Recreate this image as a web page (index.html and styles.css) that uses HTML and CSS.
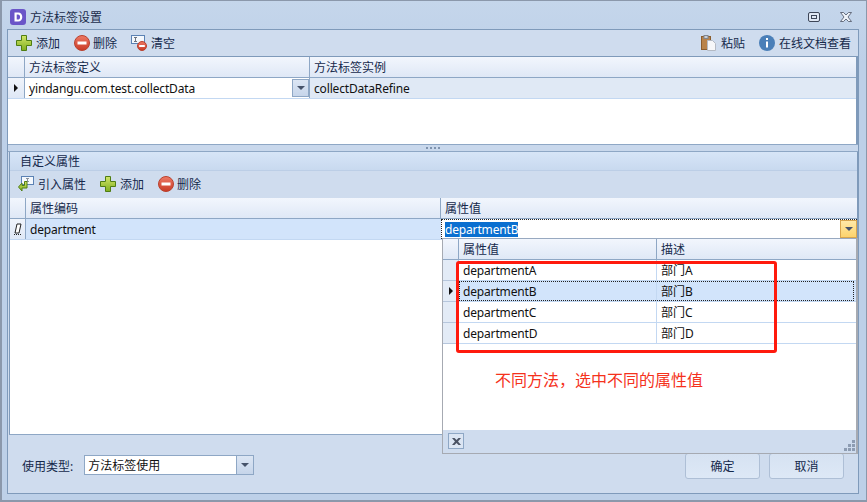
FILE: index.html
```html
<!DOCTYPE html>
<html lang="zh">
<head>
<meta charset="utf-8">
<title>方法标签设置</title>
<link rel="stylesheet" href="styles.css">
</head>
<body>
<svg class="defs" width="0" height="0" aria-hidden="true">
  <defs>
    <linearGradient id="plusFill" x1="0" y1="0" x2="0" y2="1"><stop offset="0" stop-color="#d3e66a"/><stop offset="1" stop-color="#7fae1e"/></linearGradient>
    <linearGradient id="minusFill" x1="0" y1="0" x2="0" y2="1"><stop offset="0" stop-color="#ee7a66"/><stop offset="1" stop-color="#c93a25"/></linearGradient>
    <symbol id="plus" viewBox="0 0 16 16"><path d="M5.500 0.500h5v5h5v5h-5v5h-5v-5h-5v-5h5z" fill="url(#plusFill)" stroke="#4f7d12"/></symbol>
    <symbol id="minus" viewBox="0 0 16 16"><circle cx="8" cy="8" r="7.500" fill="url(#minusFill)" stroke="#b9422f"/><rect x="3.500" y="6.500" width="9" height="3" fill="#fff"/></symbol>
  </defs>
</svg>
<div class="window">
  <header class="titlebar">
    <svg class="logo" width="16" height="16" viewBox="0 0 16 16"><rect width="16" height="16" rx="3" fill="#6a55c8"/><path d="M4.500 3.500h3.600c2.600 0 4.200 1.800 4.200 4.500s-1.600 4.500-4.200 4.500H4.500zM6.700 5.400v5.200h1.300c1.300 0 2.100-1 2.100-2.600S9.300 5.400 8 5.400z" fill="#fff"/></svg>
    <span class="title">方法标签设置</span>
    <div class="winbtns">
      <svg width="12" height="10" viewBox="0 0 12 10"><rect x="0.500" y="0.500" width="11" height="9" rx="1.500" fill="#dfe7f3" stroke="#3d4658"/><rect x="3.500" y="3.500" width="5" height="3" fill="none" stroke="#3d4658"/></svg>
      <svg width="12" height="10" viewBox="0 0 12 10"><path d="M0.500 0.500h3L6 3l2.500-2.500h3L8 5l3.500 4.500h-3L6 7 3.500 9.500h-3L4 5z" fill="#eef2f8" stroke="#4a5263" stroke-width="0.800"/></svg>
    </div>
  </header>
  <main class="client">
    <nav class="toolbar top-bar">
      <button class="tool first"><svg class="ic"><use href="#plus"/></svg><span>添加</span></button>
      <button class="tool tight"><svg class="ic"><use href="#minus"/></svg><span>删除</span></button>
      <button class="tool">
        <svg class="ic" viewBox="0 0 16 16"><rect x="0.500" y="0.500" width="13" height="8" fill="#f4f8fd" stroke="#5b82b4"/><path d="M3 2.500h3M4.500 2.500v4M3 6.500h3" stroke="#6d7480" fill="none"/><circle cx="11" cy="11" r="4.500" fill="url(#minusFill)" stroke="#b9422f"/><rect x="8.200" y="10" width="5.600" height="2" fill="#fff"/></svg><span>清空</span>
      </button>
      <span class="spacer"></span>
      <button class="tool">
        <svg class="ic" viewBox="0 0 16 16"><rect x="0.500" y="1.500" width="9" height="13" fill="#b9834a" stroke="#8a5d2e"/><rect x="3" y="0.500" width="4" height="3" fill="#c9ced6" stroke="#80868f"/><path d="M6.500 5.500h5l3 3v7h-8z" fill="#f6f7f9" stroke="#b4bac4"/></svg><span>粘贴</span>
      </button>
      <button class="tool">
        <svg class="ic" viewBox="0 0 16 16"><circle cx="8" cy="8" r="8" fill="#4a7fb8"/><rect x="7" y="3" width="2" height="2" fill="#fff"/><rect x="7" y="6.500" width="2" height="6" fill="#fff"/></svg><span>在线文档查看</span>
      </button>
    </nav>

    <section class="grid methods">
      <div class="row head methods-cols">
        <div class="ind"></div><div class="cell">方法标签定义</div><div class="cell last">方法标签实例</div>
      </div>
      <div class="row body methods-cols">
        <div class="ind"><i class="arrow"></i></div>
        <div class="cell editor en">yindangu.com.test.collectData<span class="drop"><i></i></span></div>
        <div class="cell selected last en">collectDataRefine</div>
      </div>
    </section>

    <div class="splitter"><span></span></div>

    <section class="group">
      <h2 class="group-title">自定义属性</h2>
      <nav class="toolbar sub-bar">
        <button class="tool first">
          <svg class="ic" viewBox="0 0 16 16"><rect x="3.500" y="0.500" width="12" height="8" fill="#f4f8fd" stroke="#5b82b4"/><path d="M8 2.500h3M9.500 2.500v3M8 5.500h3" stroke="#8b919b" fill="none"/><path d="M6.500 5.500v4h-2.500V7L0.500 11 4 15v-3h5V5.500z" fill="url(#plusFill)" stroke="#4f7d12"/></svg><span>引入属性</span>
        </button>
        <button class="tool"><svg class="ic"><use href="#plus"/></svg><span>添加</span></button>
        <button class="tool tight"><svg class="ic"><use href="#minus"/></svg><span>删除</span></button>
      </nav>
      <div class="grid attrs">
        <div class="row head attrs-cols">
          <div class="ind"></div><div class="cell">属性编码</div><div class="cell last">属性值</div>
        </div>
        <div class="row body attrs-cols">
          <div class="ind">
            <svg width="8" height="12" viewBox="0 0 8 12"><path d="M3 1h4L5 10H1z" fill="#fff" stroke="#222"/><path d="M0 11.500h8" stroke="#222" stroke-dasharray="1 1"/></svg>
          </div>
          <div class="cell active en">department</div>
          <div class="cell value-editor last en"><span class="picked">departmentB</span><span class="drop hot"><i></i></span></div>
        </div>
      </div>
    </section>

    <footer class="footer">
      <label class="type-label">使用类型:</label>
      <div class="combo"><span>方法标签使用</span><span class="drop"><i></i></span></div>
      <span class="spacer"></span>
      <button class="btn">确定</button>
      <button class="btn">取消</button>
    </footer>
  </main>

  <!-- 下拉列表：属性值候选项 -->
  <div class="popup">
    <div class="row head popup-cols">
      <div class="ind"></div><div class="cell">属性值</div><div class="cell last">描述</div>
    </div>
    <div class="row pop-row popup-cols"><div class="ind"></div><div class="cell en">departmentA</div><div class="cell last">部门A</div></div>
    <div class="row pop-row current popup-cols"><div class="ind"><i class="arrow"></i></div><div class="cell en">departmentB</div><div class="cell last">部门B</div></div>
    <div class="row pop-row popup-cols"><div class="ind"></div><div class="cell en">departmentC</div><div class="cell last">部门C</div></div>
    <div class="row pop-row popup-cols"><div class="ind"></div><div class="cell en">departmentD</div><div class="cell last">部门D</div></div>
    <div class="pop-fill"></div>
    <div class="pop-foot">
      <span class="pop-close"><svg width="9" height="7" viewBox="0 0 9 7"><path d="M0 0h2.500L4.500 2 6.500 0H9L6 3.500 9 7H6.500L4.500 5 2.500 7H0L3 3.500z" fill="#4a5263"/></svg></span>
      <svg class="grip" width="11" height="11" viewBox="0 0 11 11"><path d="M8 0h3v3H8zM4 4h3v3H4zM8 4h3v3H8zM0 8h3v3H0zM4 8h3v3H4zM8 8h3v3H8z" fill="#8d9cb2"/></svg>
    </div>
  </div>

  <div class="callout"></div>
  <p class="callout-note">不同方法，选中不同的属性值</p>
</div>
</body>
</html>
```
FILE: styles.css
```css
* { box-sizing: border-box; }

html, body { margin: 0; padding: 0; }

body {
  width: 867px;
  height: 502px;
  overflow: hidden;
  font: 12px/1 "Noto Sans", "Noto Sans CJK SC", sans-serif;
  color: #15294b;
}

.defs { position: absolute; }

button { font: inherit; color: inherit; background: none; border: 0; padding: 0; }

.window {
  position: relative;
  width: 867px;
  height: 502px;
  display: flex;
  flex-direction: column;
  padding: 0 7px 6px 5px;
  background: linear-gradient(#c5d6eb, #bdd0e8 60px);
  border: 1px solid #8b98ab;
  border-bottom-width: 2px;
  border-left-width: 2px;
}

/* Title bar */
.titlebar {
  height: 28px;
  flex: none;
  display: flex;
  align-items: center;
  padding: 4px 0 0 3px;
}
.logo { margin-right: 4px; }
.title { font-size: 12px; color: #1b2c4a; padding-top: 2px; }
.winbtns {
  margin-left: auto;
  margin-right: 7px;
  display: flex;
  gap: 20px;
  align-items: center;
}

/* Client area */
.client {
  flex: 1;
  display: flex;
  flex-direction: column;
  background: #cfdcee;
  border: 1px solid #7f9aba;
  min-height: 0;
}

.toolbar { display: flex; align-items: center; flex: none; }
.top-bar { height: 27px; padding: 0 7px 0 1px; gap: 14px; border-bottom: 1px solid #7f9aba; }
.sub-bar { height: 27px; padding: 0 0 1px 1px; gap: 14px; background: #cfdcee; }
.spacer { flex: 1; }

.tool { display: flex; align-items: center; gap: 4px; white-space: nowrap; color: #15294b; }
.tool span { padding-top: 2px; }
.tool.first { margin-left: 7px; }
.tool.tight { gap: 3px; }
.ic { width: 16px; height: 16px; flex: none; }

/* Grids */
.grid { background: #fff; flex: none; }
.methods { height: 87px; border-right: 2px solid #7f9aba; }
.attrs { flex: 1; }

.row { display: grid; }
.methods-cols { grid-template-columns: 17px 285px 1fr; }
.attrs-cols { grid-template-columns: 16px 415px 1fr; }
.popup-cols { grid-template-columns: 16px 198px 1fr; }

.head { height: 21px; background: linear-gradient(#f2f6fd, #dfe8f6); border-bottom: 1px solid #8ea7c5; }
.body { height: 21px; border-bottom: 1px solid #c3d8f2; }

.ind {
  display: flex;
  align-items: center;
  justify-content: center;
  border-right: 1px solid #8ea7c5;
}
.body .ind { background: linear-gradient(#f0f4fb, #dfe8f6); }
.arrow {
  width: 0;
  height: 0;
  border-left: 4px solid #111;
  border-top: 4px solid transparent;
  border-bottom: 4px solid transparent;
}

.cell {
  display: flex;
  align-items: center;
  padding: 1px 0 0 4px;
  min-width: 0;
  border-right: 1px solid #8ea7c5;
  white-space: nowrap;
  color: #15294b;
}
.cell.last { border-right: 0; }
.en { letter-spacing: -0.16px; }

.methods .editor { position: relative; background: #fff; color: #111; }
.selected { background: #e0e9f5; color: #111; }
.active { background: #d2e4fb; color: #111; border-right-color: #d2e4fb; }

.value-editor {
  position: relative;
  background: #fff;
  color: #fff;
  outline: 1px dotted #222;
  outline-offset: -1px;
}
.picked { background: #0a6fd0; line-height: 15px; height: 15px; }

.drop {
  position: absolute;
  right: 0;
  top: 1px;
  bottom: 1px;
  width: 17px;
  display: flex;
  align-items: center;
  justify-content: center;
  background: linear-gradient(#dce6f4, #c6d5ea);
  border: 1px solid #8ea7c5;
}
.drop i {
  width: 0;
  height: 0;
  border-top: 4px solid #46536a;
  border-left: 4px solid transparent;
  border-right: 4px solid transparent;
}
.drop.hot { background: linear-gradient(#ffe9a8, #fdd36c); border-color: #d8a64f; }

/* Splitter between the two sections */
.splitter {
  height: 8px;
  flex: none;
  display: flex;
  align-items: center;
  justify-content: center;
  background: #c9d8ec;
  border-top: 1px solid #8ea7c5;
  border-bottom: 1px solid #8ea7c5;
}
.splitter span { width: 14px; height: 1px; border-top: 2px dotted #7f93ae; }

/* Custom attributes section */
.group {
  height: 283px;
  flex: none;
  display: flex;
  flex-direction: column;
  margin-left: 1px;
  border-right: 1px solid #7f9aba;
  border-left: 1px solid #7f9aba;
  border-bottom: 1px solid #8ea7c5;
}
.group-title {
  margin: 0;
  height: 19px;
  flex: none;
  display: flex;
  align-items: center;
  padding: 1px 0 0 10px;
  font-size: 12px;
  font-weight: 400;
  color: #15294b;
  background: linear-gradient(#d7e5f7, #c8d9ef);
  border-bottom: 1px solid #bccee6;
}

/* Footer */
.footer {
  flex: 1;
  display: flex;
  align-items: flex-start;
  padding: 18px 14px 0 14px;
  background: #cfdcee;
}
.type-label { height: 20px; margin: 2px 11px 0 0; padding-top: 3px; display: flex; align-items: center; }
.combo {
  position: relative;
  width: 170px;
  height: 20px;
  margin-top: 2px;
  display: flex;
  align-items: center;
  padding: 2px 0 0 3px;
  color: #111;
  background: #fff;
  border: 1px solid #8ea7c5;
}
.combo .drop { top: 0; bottom: 0; right: 0; border-width: 0 0 0 1px; }
.btn {
  width: 75px;
  height: 26px;
  margin-left: 9px;
  padding-top: 1px;
  border: 1px solid #aebfd6;
  border-radius: 3px;
  background: linear-gradient(#d6e2f2, #dde8f6);
  color: #15294b;
}

/* Drop-down list overlaying the attribute grid */
.popup {
  position: absolute;
  left: 440px;
  top: 237px;
  width: 416px;
  height: 216px;
  display: flex;
  flex-direction: column;
  background: #fff;
  border: 1px solid #a6aab2;
  border-top: 0;
  border-right-width: 2px;
}
.popup .head { border-top: 1px solid #98a9c0; height: 22px; }
.pop-row { height: 21px; border-bottom: 1px solid #c3d8f2; }
.pop-row .ind { background: #e3ebf6; border-right-color: #b6c6dc; border-bottom: 1px solid #b6c6dc; margin-bottom: -1px; }
.pop-row .cell { border-right-color: #c3d8f2; color: #111; }
.pop-row.current { background: #d2e4fb; position: relative; }
.pop-row.current::after {
  content: "";
  position: absolute;
  left: 16px;
  right: 2px;
  top: 0;
  bottom: 0;
  border: 1px dotted #222;
}
.pop-fill { flex: 1; }
.pop-foot {
  position: relative;
  height: 23px;
  flex: none;
  background: #cfdcee;
}
.pop-close {
  position: absolute;
  left: 5px;
  top: 3px;
  width: 16px;
  height: 16px;
  display: flex;
  align-items: center;
  justify-content: center;
  background: #dbe5f3;
  border: 1px solid #8ea7c5;
}
.grip { position: absolute; right: 1px; bottom: 2px; }

/* Highlight drawn around the options */
.callout {
  position: absolute;
  left: 454px;
  top: 260px;
  width: 321px;
  height: 92px;
  border: 3px solid #ff1a0d;
  border-radius: 3px;
  pointer-events: none;
}
.callout-note {
  position: absolute;
  left: 493px;
  top: 369px;
  margin: 0;
  font-size: 16px;
  line-height: 20px;
  color: #f5321c;
}
```
